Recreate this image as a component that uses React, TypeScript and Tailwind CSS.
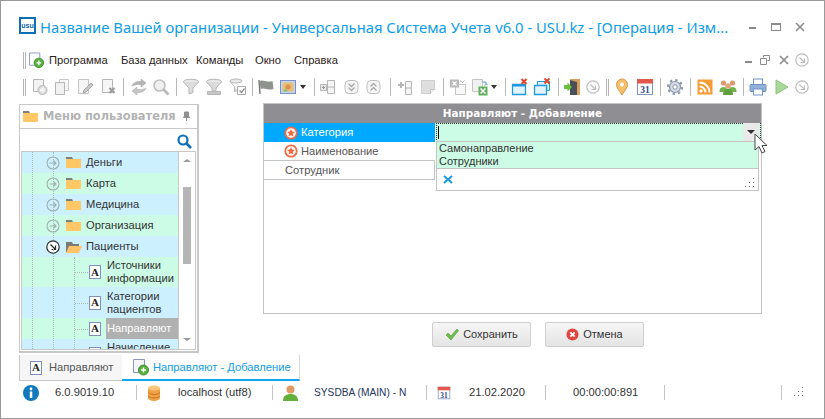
import type { ReactNode } from 'react'

const font = { fontFamily: '"Liberation Sans", sans-serif' }

function Ico({ children, size = 18 }: { children: ReactNode; size?: number }) {
  return (
    <svg width={size} height={size} viewBox="0 0 18 18" fill="none" className="shrink-0">
      {children}
    </svg>
  )
}

function Tool({ className = '', children }: { className?: string; children: ReactNode }) {
  return <div className={`flex h-[18px] w-[18px] shrink-0 items-center justify-center ${className}`}>{children}</div>
}

function Sep({ className = '' }: { className?: string }) {
  return <div className={`h-[18px] w-px shrink-0 bg-[#b9b9b9] ${className}`} />
}

function Grip({ className = '' }: { className?: string }) {
  return (
    <div className={`flex h-[17px] w-[3px] shrink-0 justify-between ${className}`}>
      <div className="w-px bg-[#b4b4b4]" />
      <div className="w-px bg-[#b4b4b4]" />
    </div>
  )
}

function DropArrow({ className = '' }: { className?: string }) {
  return (
    <div className={`flex h-[18px] w-[7px] shrink-0 items-center ${className}`}>
      <div className="h-0 w-0 border-x-[3.5px] border-t-[4px] border-x-transparent border-t-[#333]" />
    </div>
  )
}

const G = '#b5b5b5'

const IconAddDoc = () => (
  <Ico>
    <path d="M2.500 1.500h10v12h-10z" fill="#f4f4f4" stroke={G} />
    <circle cx="11.500" cy="12" r="4.500" fill="#dedede" stroke={G} />
    <path d="M9 12h5M11.500 9.500v5" stroke="#fff" strokeWidth="1.600" />
  </Ico>
)
const IconCopy = () => (
  <Ico>
    <path d="M6.500 1.500h9v11h-9z" fill="#f6f6f6" stroke="#c9c9c9" />
    <path d="M2.500 4.500h9v12h-9z" fill="#f1f1f1" stroke={G} />
  </Ico>
)
const IconEdit = () => (
  <Ico>
    <path d="M2.500 1.500h10v14h-10z" fill="#f6f6f6" stroke="#c4c4c4" />
    <path d="M7 15l1-3 7-7 2 2-7 7z" fill="#c9c9c9" stroke="#a8a8a8" />
  </Ico>
)
const IconDelDoc = () => (
  <Ico>
    <path d="M2.500 1.500h10v13h-10z" fill="#f6f6f6" stroke={G} />
    <path d="M9.500 10l5 5M14.500 10l-5 5" stroke="#9c9c9c" strokeWidth="2.200" />
  </Ico>
)
const IconRefresh = () => (
  <Ico>
    <path d="M2 8c1-3 4-4.500 7-4.500h2V1l5 4-5 4V6.500H9C6 6.500 4 7 2 8z" fill="#b4b4b4" stroke="#a0a0a0" strokeWidth="0.500" />
    <path d="M16 10c-1 3-4 4.500-7 4.500H7V17l-5-4 5-4v2.500h2c3 0 5-.500 7-1.500z" fill="#c6c6c6" stroke="#a8a8a8" strokeWidth="0.500" />
  </Ico>
)
const IconSearchGrey = () => (
  <Ico>
    <circle cx="7.500" cy="7.500" r="5.500" fill="#f0f0f0" stroke="#c0c0c0" strokeWidth="1.600" />
    <path d="M11.500 11.500l5 5" stroke="#b8b8b8" strokeWidth="2.600" />
  </Ico>
)
const IconFunnel = () => (
  <Ico>
    <ellipse cx="9" cy="3.500" rx="7.500" ry="2.200" fill="#e8e8e8" stroke={G} />
    <path d="M1.500 4l5.500 6v6l4-1.500V10l5.500-6" fill="#dcdcdc" stroke={G} />
  </Ico>
)
const IconFunnelBase = () => (
  <Ico>
    <ellipse cx="9" cy="3.500" rx="7.500" ry="2.200" fill="#e8e8e8" stroke={G} />
    <path d="M1.500 4l5.500 6v3h4v-3l5.500-6" fill="#dcdcdc" stroke={G} />
    <path d="M2.500 13.500h13v3h-13z" fill="#c8c8c8" stroke={G} />
  </Ico>
)
const IconFunnelCheck = () => (
  <Ico>
    <ellipse cx="7" cy="3" rx="6" ry="2" fill="#e8e8e8" stroke={G} />
    <path d="M1 3.500l4.500 5v5l3-1" fill="#dcdcdc" stroke={G} />
    <path d="M8.500 8.500h8v8h-8z" fill="#fff" stroke="#a8a8a8" />
    <path d="M10.500 12.500l2 2 3-4" stroke="#8f8f8f" strokeWidth="1.300" />
  </Ico>
)
const IconFlag = () => (
  <Ico>
    <path d="M2 2l1 14" stroke="#777" strokeWidth="1.400" />
    <path d="M2.500 3c4-2 7 2 13 0l1 8c-5 2-9-2-13 0z" fill="#8f948f" />
  </Ico>
)
const IconImage = () => (
  <Ico>
    <rect x="1.500" y="2.500" width="15" height="13" fill="#bcd8ee" stroke="#7e8fc4" />
    <rect x="3.500" y="4.500" width="11" height="9" fill="#e9bd78" />
    <circle cx="9" cy="9" r="2.500" fill="#d98f4a" />
    <path d="M3.500 13.500l3-3 3 3z" fill="#8fc07a" />
  </Ico>
)
const IconGridAdd = () => (
  <Ico>
    <path d="M8.500 2.500h7v13h-7z" fill="#f5f5f5" stroke={G} />
    <path d="M8.500 9h7" stroke={G} />
    <path d="M1.500 6.500h6v6h-6z" fill="#e6e6e6" stroke={G} />
    <path d="M3 9.500h3M4.500 8v3" stroke="#999" />
  </Ico>
)
const IconExpand = ({ up = false }: { up?: boolean }) => (
  <Ico>
    <rect x="2" y="2.500" width="13" height="13" rx="4" fill="#f6f6f6" stroke="#bdbdbd" />
    <path
      d={up ? 'M5.500 8.500l3-3 3 3M5.500 12.500l3-3 3 3' : 'M5.500 5.500l3 3 3-3M5.500 9.500l3 3 3-3'}
      stroke="#a6a6a6"
      strokeWidth="1.300"
    />
  </Ico>
)
const IconColAdd = () => (
  <Ico>
    <path d="M9.500 3.500h6v13h-6zM9.500 10h6" fill="#f5f5f5" stroke={G} />
    <path d="M2 7h6M5 4v6" stroke="#b5b5b5" strokeWidth="2" />
  </Ico>
)
const IconNote = () => (
  <Ico>
    <path d="M2.500 2.500h13v9l-4 4h-9z" fill="#dedede" stroke="#cfcfcf" />
    <path d="M11.500 15.500v-4h4" fill="#f2f2f2" stroke="#c0c0c0" />
  </Ico>
)
const IconExport = () => (
  <Ico>
    <path d="M6.500 6.500h10v10h-10z" fill="#f7f7f7" stroke="#c4c4c4" />
    <rect x="1" y="1.500" width="9" height="8" fill="#b9b9b9" />
    <path d="M3.500 3.500l4 4M7.500 3.500l-4 4" stroke="#fff" strokeWidth="1.300" />
    <path d="M11 2.500l2.500 2 2-2" stroke="#b5b5b5" />
  </Ico>
)
const IconExcel = () => (
  <Ico>
    <path d="M1.500 1.500h10v12h-10z" fill="#f0f0f0" stroke="#c4c4c4" />
    <rect x="7.500" y="8.500" width="9" height="9" fill="#5faf5f" />
    <path d="M9.500 10.500l5 5M14.500 10.500l-5 5" stroke="#fff" strokeWidth="1.500" />
    <path d="M11 4h4v3M13.500 7.500l2-1.500 1 1" stroke="#5a9fd4" />
  </Ico>
)
const IconWinClose = () => (
  <Ico>
    <path d="M1.500 6.500h13v10h-13z" fill="#e3f3fc" stroke="#1e9be0" strokeWidth="1.300" />
    <path d="M1.500 6.500h13v2h-13z" fill="#1e9be0" />
    <path d="M10.500 1l5 5M15.500 1l-5 5" stroke="#e2452c" strokeWidth="2" />
  </Ico>
)
const IconWinsClose = () => (
  <Ico>
    <path d="M4.500 3.500h12v9h-12z" fill="#d8effb" stroke="#1e9be0" />
    <path d="M1.500 7.500h12v9h-12z" fill="#e3f3fc" stroke="#1e9be0" strokeWidth="1.300" />
    <path d="M11.500 0.500l5 5M16.500 0.500l-5 5" stroke="#e2452c" strokeWidth="2" />
  </Ico>
)
const IconDoor = () => (
  <Ico>
    <rect x="7" y="1" width="10" height="16" fill="#d9a15f" />
    <path d="M7 2l7 2v13H7z" fill="#4a4f57" />
    <path d="M1 7h3.500V4.500L9 9l-4.500 4.500V11H1z" fill="#65c23a" />
  </Ico>
)
const IconCircleArrow = ({ color = '#bdbdbd' }: { color?: string }) => (
  <Ico>
    <circle cx="9" cy="9" r="6.200" fill="#fff" stroke={color} strokeWidth="1.200" />
    <path d="M6.500 6.500l5 5M11.500 7.500v4h-4" stroke={color} strokeWidth="1.200" />
  </Ico>
)
const IconPin = () => (
  <Ico>
    <path d="M9 17C6 12 3.500 10 3.500 6.500a5.500 5.500 0 0 1 11 0C14.500 10 12 12 9 17z" fill="#f6bf6d" stroke="#d59a46" />
    <circle cx="9" cy="6.500" r="2" fill="#fff" />
  </Ico>
)
const IconCal = ({ size = 18 }: { size?: number }) => (
  <Ico size={size}>
    <rect x="1.500" y="1.500" width="15" height="15" fill="#fff" stroke="#7f94c0" />
    <rect x="1" y="1" width="16" height="4.500" fill="#e2584a" />
    <text x="9" y="15" textAnchor="middle" fontSize="9.500" fontWeight="700" fill="#2f4c8c" fontFamily="Liberation Serif, serif">
      31
    </text>
  </Ico>
)
const IconGear = () => (
  <Ico>
    <circle cx="9" cy="9" r="5.500" fill="#d5dbe6" stroke="#8d97aa" strokeWidth="1.200" />
    <circle cx="9" cy="9" r="7" stroke="#8d97aa" strokeWidth="2.200" strokeDasharray="2.400 3.100" />
    <circle cx="9" cy="9" r="2.200" fill="#fff" stroke="#8d97aa" />
  </Ico>
)
const IconRss = () => (
  <Ico>
    <rect x="1.500" y="1.500" width="15" height="15" fill="#f59a35" />
    <circle cx="5" cy="13" r="1.700" fill="#fff" />
    <path d="M3.500 8.500a6 6 0 0 1 6 6M3.500 4.500a10 10 0 0 1 10 10" stroke="#fff" strokeWidth="1.800" />
  </Ico>
)
const IconPeople = () => (
  <Ico>
    <circle cx="4.500" cy="5" r="2.600" fill="#d99a6c" />
    <circle cx="13.500" cy="5" r="2.600" fill="#d99a6c" />
    <circle cx="9" cy="8" r="2.800" fill="#e0a77a" />
    <path d="M0.500 13c0-3 2-4 4-4s3 1 4 3v2H0.500zM9.500 12c1-2 2-3 4-3s4 1 4 4v1h-8z" fill="#73b24c" />
    <path d="M4 17c0-4 2-6 5-6s5 2 5 6z" fill="#5f9f3c" />
  </Ico>
)
const IconPrinter = () => (
  <Ico>
    <rect x="4.500" y="1" width="9" height="6" fill="#fff" stroke="#6f94c4" />
    <rect x="1" y="6.500" width="16" height="7" rx="1" fill="#8fb1da" stroke="#6f94c4" />
    <rect x="4.500" y="11" width="9" height="6" fill="#fff" stroke="#6f94c4" />
  </Ico>
)
const IconPlay = () => (
  <Ico>
    <path d="M4 2l12 7-12 7z" fill="#a8d89a" stroke="#8cc37c" />
  </Ico>
)
const IconFolder = ({ open = false }: { open?: boolean }) => (
  <svg width="16" height="14" viewBox="0 0 16 14" className="shrink-0">
    {open ? (
      <>
        <path d="M0 2h6l1 2h6v8H0z" fill="#7a7a7a" />
        <path d="M3 6h13l-3 7H0z" fill="#ffc266" />
      </>
    ) : (
      <>
        <path d="M0 1h6l1 2H0z" fill="#7f7f7f" />
        <rect x="0" y="3" width="15" height="9" fill="#ffc766" />
      </>
    )}
  </svg>
)
const IconLeaf = () => (
  <div
    className="flex h-[14px] w-[12px] shrink-0 items-center justify-center border border-[#7f8fc0] bg-white text-[11px] font-bold leading-none text-[#222]"
    style={{ fontFamily: '"Liberation Serif", serif' }}
  >
    A
  </div>
)
const IconTabAdd = () => (
  <svg width="17" height="17" viewBox="0 0 17 17" className="shrink-0">
    <path d="M0.500 0.500h11v13h-11z" fill="#f5f7fb" stroke="#8a97c0" />
    <circle cx="10.500" cy="11" r="5" fill="#58b03f" stroke="#3e8f2c" />
    <path d="M8 11h5M10.500 8.500v5" stroke="#fff" strokeWidth="1.400" />
  </svg>
)
const IconStar = () => (
  <svg width="14" height="14" viewBox="0 0 14 14" className="shrink-0">
    <circle cx="7" cy="7" r="5.700" fill="#fff" stroke="#ef6a45" strokeWidth="1.800" />
    <path d="M7 3l1.200 2.600 2.800.3-2.100 1.900.6 2.800L7 9.200l-2.500 1.400.6-2.800L3 5.900l2.800-.3z" fill="#ef6a45" />
  </svg>
)
const ResizeGrip = ({ className = '' }: { className?: string }) => (
  <svg width="11" height="11" viewBox="0 0 11 11" className={className}>
    <path d="M9 0h1v1H9zM9 4h1v1H9zM5 4h1v1H5zM9 8h1v1H9zM5 8h1v1H5zM1 8h1v1H1z" fill="#666" />
  </svg>
)

function Tree({ open = false, label, cls }: { open?: boolean; label: string; cls: string }) {
  return (
    <div className={`flex h-[21px] shrink-0 items-center pl-[21px] ${cls}`}>
      <div className="flex w-[20px] items-center justify-center">
        {open ? (
          <IconCircleArrow color="#2b2b2b" />
        ) : (
          <svg width="14" height="14" viewBox="0 0 14 14">
            <circle cx="7" cy="7" r="6" fill="none" stroke="#9fb0ae" strokeWidth="1.100" />
            <path d="M3.500 7h6.500M7.500 4.500L10 7l-2.500 2.500" fill="none" stroke="#9fb0ae" strokeWidth="1.100" />
          </svg>
        )}
      </div>
      <div className="ml-[3px] mr-[4px]">
        <IconFolder open={open} />
      </div>
      <span className="text-[11.200px] text-[#333]">{label}</span>
    </div>
  )
}

function Leaf({ lines, cls, selected = false }: { lines: string[]; cls: string; selected?: boolean }) {
  return (
    <div className={`relative flex shrink-0 items-stretch pl-[67px] ${cls}`}>
      <div className="flex w-[17px] items-center">
        <IconLeaf />
      </div>
      <div
        className={`flex flex-1 flex-col justify-center pl-[1px] text-[11.200px] leading-[13px] ${
          selected ? 'bg-[#b0b0b0] text-white' : 'text-[#333]'
        }`}
      >
        {lines.map((l) => (
          <span key={l}>{l}</span>
        ))}
      </div>
      <div className="absolute left-[53px] top-1/2 w-[13px] border-t border-dotted border-[#a9b9b9]" />
    </div>
  )
}

function StatusText({ className, children }: { className: string; children: ReactNode }) {
  return <span className={`shrink-0 whitespace-nowrap text-[#333] ${className}`}>{children}</span>
}

function StatusSep({ className = '' }: { className?: string }) {
  return <div className={`h-[15px] w-px shrink-0 bg-[#c4c4c4] ${className}`} />
}

export default function App() {
  return (
    <div
      className="relative flex h-[419px] w-[825px] flex-col overflow-hidden border border-[#9a9a9a] bg-white"
      style={font}
    >
      {/* title */}
      <div className="flex h-[46px] shrink-0 items-end pb-[8px] pl-[18px]">
        <div className="mb-[5px] flex h-[17px] w-[17px] shrink-0 items-center justify-center border-2 border-[#0d6fb8]">
          <span className="text-[7px] font-bold leading-none text-[#0d5fa8]">usu</span>
        </div>
        <span
          className="ml-[4px] w-[688px] shrink-0 whitespace-nowrap text-[14.800px] leading-[24px] text-[#0e9de6]"
          style={{ fontFamily: '"Noto Sans", sans-serif' }}
        >
          Название Вашей организации - Универсальная Система Учета v6.0 - USU.kz - [Операция - Изм...
        </span>
        <div className="mb-[10px] ml-[21px] h-[2px] w-[7px] bg-[#8a8a8a]" />
        <div className="mb-[8px] ml-[15px] h-[8px] w-[10px] border border-t-2 border-[#8a8a8a]" />
        <svg width="10" height="10" viewBox="0 0 10 10" className="mb-[7px] ml-[14px]">
          <path d="M1 1l8 8M9 1l-8 8" stroke="#8a8a8a" strokeWidth="1.600" />
        </svg>
      </div>

      {/* menu */}
      <div className="flex h-[26px] shrink-0 items-center pl-[22px] text-[11.200px] text-[#2a2020]">
        <Grip className="mr-[3px]" />
        <svg width="16" height="17" viewBox="0 0 17 17" className="shrink-0">
          <path d="M0.500 0.500h11v13h-11z" fill="#fff" stroke="#8a97c0" />
          <circle cx="10.500" cy="11" r="5" fill="#58b03f" stroke="#3e8f2c" />
          <path d="M8 11h5M10.500 8.500v5" stroke="#fff" strokeWidth="1.400" />
        </svg>
        <span className="ml-[4px] w-[72px] shrink-0">Программа</span>
        <span className="w-[75px] shrink-0">База данных</span>
        <span className="w-[59px] shrink-0">Команды</span>
        <span className="w-[39px] shrink-0">Окно</span>
        <span>Справка</span>
        <div className="flex-1" />
        <div className="mt-[3px] h-[2px] w-[7px] bg-[#8a8a8a]" />
        <svg width="10" height="10" viewBox="0 0 10 10" className="ml-[8px]">
          <path d="M3.500 2.500V.5h6v5h-2M.5 3.500h6v6h-6z" fill="none" stroke="#8a8a8a" />
        </svg>
        <svg width="10" height="10" viewBox="0 0 10 10" className="ml-[9px]">
          <path d="M1 1l8 8M9 1l-8 8" stroke="#8a8a8a" strokeWidth="1.600" />
        </svg>
        <div className="ml-[4px] mr-[13px]">
          <IconCircleArrow />
        </div>
      </div>

      {/* toolbar */}
      <div className="flex h-[28px] shrink-0 items-center pl-[22px]">
        <Grip className="mr-[2px]" />
        <Tool className="ml-[3px]"><IconAddDoc /></Tool>
        <Tool className="ml-[4px]"><IconCopy /></Tool>
        <Tool className="ml-[5px]"><IconEdit /></Tool>
        <Tool className="ml-[6px]"><IconDelDoc /></Tool>
        <Sep className="ml-[5px]" />
        <Tool className="ml-[6px]"><IconRefresh /></Tool>
        <Tool className="ml-[4px]"><IconSearchGrey /></Tool>
        <Sep className="ml-[6px]" />
        <Tool className="ml-[5px]"><IconFunnel /></Tool>
        <Tool className="ml-[5px]"><IconFunnelBase /></Tool>
        <Tool className="ml-[6px]"><IconFunnelCheck /></Tool>
        <Sep className="ml-[5px]" />
        <Tool className="ml-[4px]"><IconFlag /></Tool>
        <Tool className="ml-[4px]"><IconImage /></Tool>
        <DropArrow className="ml-[3px]" />
        <Sep className="ml-[7px]" />
        <Tool className="ml-[4px]"><IconGridAdd /></Tool>
        <Tool className="ml-[6px]"><IconExpand /></Tool>
        <Tool className="ml-[4px]"><IconExpand up /></Tool>
        <Sep className="ml-[7px]" />
        <Tool className="ml-[5px]"><IconColAdd /></Tool>
        <Tool className="ml-[5px]"><IconNote /></Tool>
        <Sep className="ml-[6px]" />
        <Tool className="ml-[5px]"><IconExport /></Tool>
        <Tool className="ml-[4px]"><IconExcel /></Tool>
        <DropArrow className="ml-[2px]" />
        <Sep className="ml-[7px]" />
        <Tool className="ml-[5px]"><IconWinClose /></Tool>
        <Tool className="ml-[4px]"><IconWinsClose /></Tool>
        <Sep className="ml-[7px]" />
        <Tool className="ml-[4px]"><IconDoor /></Tool>
        <Tool className="ml-[3px]"><IconCircleArrow /></Tool>
        <Grip className="ml-[4px]" />
        <Tool className="ml-[4px]"><IconPin /></Tool>
        <Tool className="ml-[5px]"><IconCal /></Tool>
        <Sep className="ml-[6px]" />
        <Tool className="ml-[5px]"><IconGear /></Tool>
        <Sep className="ml-[6px]" />
        <Tool className="ml-[5px]"><IconRss /></Tool>
        <Tool className="ml-[5px]"><IconPeople /></Tool>
        <Sep className="ml-[6px]" />
        <Tool className="ml-[5px]"><IconPrinter /></Tool>
        <Tool className="ml-[5px]"><IconPlay /></Tool>
        <Tool className="ml-[3px]"><IconCircleArrow /></Tool>
      </div>

      {/* body */}
      <div className="flex h-[254px] shrink-0 pl-[18px] pt-[2px]">
        {/* user menu */}
        <div className="mt-px flex h-[249px] w-[180px] shrink-0 flex-col border-2 border-l border-t border-[#c8c8c8]">
          <div className="flex h-[24px] shrink-0 items-center border-b border-[#c8c8c8] pl-[3px] pr-[6px]">
            <IconFolder />
            <span
              className="ml-[4px] flex-1 whitespace-nowrap text-[11.400px] font-bold text-[#b3b3b3]"
              style={{ fontFamily: '"DejaVu Sans", sans-serif' }}
            >
              Меню пользователя
            </span>
            <svg width="9" height="11" viewBox="0 0 9 11">
              <path d="M2.500 1h4v4l1 1.500h-6l1-1.500zM4.500 6.500V10" fill="#8f8f8f" stroke="#8f8f8f" />
            </svg>
          </div>
          <div className="flex h-[22px] shrink-0 items-center justify-end pr-[5px] pt-[2px]">
            <svg width="15" height="15" viewBox="0 0 15 15">
              <circle cx="6" cy="6" r="4.500" fill="none" stroke="#0e6fb8" strokeWidth="2.200" />
              <path d="M9.500 9.500l4.500 4.500" stroke="#0e6fb8" strokeWidth="2.600" />
            </svg>
          </div>
          <div className="mx-[1px] flex h-[199px] overflow-hidden border border-[#c8c8c8]">
            <div className="relative flex h-full w-[157px] shrink-0 flex-col overflow-hidden border-r border-[#c8c8c8]">
              <Tree label="Деньги" cls="bg-[#cdf0ff]" />
              <Tree label="Карта" cls="bg-[#cdfce6]" />
              <Tree label="Медицина" cls="bg-[#cdf0ff]" />
              <Tree label="Организация" cls="bg-[#cdfce6]" />
              <Tree open label="Пациенты" cls="bg-[#cdf0ff]" />
              <Leaf lines={['Источники', 'информации']} cls="h-[30px] bg-[#cdfce6]" />
              <Leaf lines={['Категории', 'пациентов']} cls="h-[31px] bg-[#cdf0ff]" />
              <Leaf selected lines={['Направляют']} cls="h-[21px] bg-[#cdfce6]" />
              <Leaf lines={['Начисление', '\u00a0']} cls="h-[30px] bg-[#cdf0ff]" />
              {/* tree guide lines */}
              <div className="absolute left-[10px] top-0 h-full border-l border-dotted border-[#a9b9b9]" />
              <div className="absolute left-[31px] top-0 h-[88px] border-l border-dotted border-[#a9b9b9]" />
              <div className="absolute left-[31px] top-[97px] h-[110px] border-l border-dotted border-[#a9b9b9]" />
              <div className="absolute left-[52px] top-[105px] h-[100px] border-l border-dotted border-[#a9b9b9]" />
            </div>
            <div className="flex flex-1 flex-col items-center pt-[7px]">
              <div className="h-0 w-0 border-x-[4px] border-b-[3px] border-x-transparent border-b-[#999]" />
              <div className="mt-[25px] h-[77px] w-[8px] shrink-0 bg-[#b5b5b5]" />
              <div className="flex-1" />
              <div className="mb-[8px] h-0 w-0 border-x-[4px] border-t-[3px] border-x-transparent border-t-[#999]" />
            </div>
          </div>
        </div>

        {/* form */}
        <div className="ml-[64px] flex w-[499px] shrink-0 flex-col">
          <div className="flex h-[211px] shrink-0 flex-col border border-[#c4c4c4]">
            <div
              className="flex h-[19px] shrink-0 items-center justify-center bg-[#8e8e93] pl-[20px] text-[10.400px] font-bold text-white"
              style={{ fontFamily: '"DejaVu Sans", sans-serif' }}
            >
              Направляют - Добавление
            </div>
            <div className="flex h-[19px] shrink-0">
              <div className="flex w-[171px] shrink-0 items-center bg-[#00a8ff] pl-[20px] text-[11.200px] text-white">
                <IconStar />
                <span className="ml-[3px]">Категория</span>
              </div>
              <div className="ml-px flex-1 border border-dotted border-[#333] bg-[#cdfce6]">
                <div className="ml-[1px] mt-[2px] h-[13px] w-px bg-black" />
              </div>
            </div>
            <div className="flex h-[19px] w-[171px] shrink-0 items-center border-b border-[#c4c4c4] pl-[20px] text-[11.200px] text-[#555]">
              <IconStar />
              <span className="ml-[3px]">Наименование</span>
            </div>
            <div className="flex h-[19px] w-[171px] shrink-0 items-center border-b border-r border-[#c4c4c4] pl-[21px] text-[11.200px] text-[#555]">
              Сотрудник
            </div>
          </div>
          <div className="mt-[8px] flex gap-[14px] pl-[169px]">
            <button className="flex h-[25px] w-[99px] items-center justify-center rounded-[2px] border border-[#cfcfcf] bg-gradient-to-b from-[#f6f6f6] to-[#e4e4e4] text-[11px] text-[#333]">
              <svg width="14" height="13" viewBox="0 0 14 13" className="mr-[4px]">
                <path d="M1 7l2-2 3 3 6-7 1.500 1.500L6 12z" fill="#6fbe4a" stroke="#4f9a32" strokeWidth="0.600" />
              </svg>
              Сохранить
            </button>
            <button className="flex h-[25px] w-[99px] items-center justify-center rounded-[2px] border border-[#cfcfcf] bg-gradient-to-b from-[#f6f6f6] to-[#e4e4e4] text-[11px] text-[#333]">
              <svg width="13" height="13" viewBox="0 0 13 13" className="mr-[4px]">
                <circle cx="6.500" cy="6.500" r="6" fill="#e2453c" />
                <path d="M4.300 4.300l4.400 4.400M8.700 4.300l-4.400 4.400" stroke="#fff" strokeWidth="1.800" />
              </svg>
              Отмена
            </button>
          </div>
        </div>
      </div>

      {/* tabs */}
      <div className="flex h-[26px] shrink-0 pl-[18px] text-[11.200px]">
        <div className="flex w-[103px] shrink-0 items-center border-b border-l border-[#c8c8c8] bg-[#f6f6f6] pl-[10px] text-[#555]">
          <IconLeaf />
          <span className="ml-[7px] whitespace-nowrap">Направляют</span>
        </div>
        <div className="flex w-[178px] shrink-0 items-center border-b-2 border-r border-b-[#10a5ee] border-r-[#d8d8d8] pl-[11px] text-[#0e9de6]">
          <IconTabAdd />
          <span className="ml-[3px] whitespace-nowrap">Направляют - Добавление</span>
        </div>
      </div>

      {/* status bar */}
      <div className="flex h-[23px] shrink-0 items-center pl-[22px] text-[11.200px]">
        <svg width="16" height="16" viewBox="0 0 16 16" className="shrink-0">
          <circle cx="8" cy="8" r="8" fill="#1279bd" />
          <circle cx="8" cy="4" r="1.400" fill="#fff" />
          <rect x="6.800" y="6.500" width="2.500" height="6.500" fill="#fff" />
        </svg>
        <StatusText className="ml-[16px] w-[64px]">6.0.9019.10</StatusText>
        <StatusSep className="ml-[17px]" />
        <svg width="12" height="16" viewBox="0 0 12 16" className="ml-[11px] shrink-0">
          <path d="M0 3h12v10a6 3 0 0 1-12 0z" fill="#f0a345" />
          <ellipse cx="6" cy="3" rx="6" ry="2.500" fill="#f8c77d" />
          <path d="M0 7a6 2.500 0 0 0 12 0M0 10.500a6 2.500 0 0 0 12 0" fill="none" stroke="#c9722a" />
        </svg>
        <StatusText className="ml-[18px] w-[73px]">localhost (utf8)</StatusText>
        <StatusSep className="ml-[21px]" />
        <svg width="15" height="16" viewBox="0 0 15 16" className="ml-[10px] shrink-0">
          <circle cx="7.500" cy="4.500" r="4" fill="#e09a62" />
          <path d="M0 16c0-5 3-7 7.500-7S15 11 15 16z" fill="#62b03a" />
        </svg>
        <StatusText className="ml-[16px] w-[92px] text-[10.200px] text-[#26345c]">SYSDBA (MAIN) - N</StatusText>
        <StatusSep className="ml-[20px]" />
        <div className="ml-[10px] shrink-0">
          <IconCal size={14} />
        </div>
        <StatusText className="ml-[18px] w-[55px]">21.02.2020</StatusText>
        <StatusSep className="ml-[21px]" />
        <StatusText className="ml-[27px] w-[66px]">00:00:00:891</StatusText>
        <StatusSep className="ml-[25px]" />
        <StatusSep className="ml-[116px]" />
        <ResizeGrip className="ml-[11px] shrink-0" />
      </div>

      {/* dropdown over the form */}
      <div className="absolute left-[435px] top-[140px] flex h-[50px] w-[323px] flex-col border border-[#c4c4c4] bg-white text-[11px] text-[#333]">
        <div className="flex h-[27px] shrink-0 flex-col justify-center border-b border-[#c4c4c4] bg-[#cdfce6] pl-[2px] leading-[13px]">
          <span>Самонаправление</span>
          <span>Сотрудники</span>
        </div>
        <div className="flex flex-1 items-center justify-between pl-[6px] pr-[3px]">
          <svg width="10" height="9" viewBox="0 0 10 9">
            <path d="M1 1l8 7M9 1L1 8" stroke="#1a9be0" strokeWidth="2" />
          </svg>
          <ResizeGrip className="mt-[8px]" />
        </div>
      </div>
      {/* combo button + cursor */}
      <div className="absolute left-[742px] top-[122px] flex h-[18px] w-[16px] items-center justify-center bg-[#e9e9e9]">
        <div className="h-0 w-0 border-x-[4px] border-t-[4px] border-x-transparent border-t-[#333]" />
      </div>
      <svg width="14" height="21" viewBox="0 0 14 21" className="absolute left-[753px] top-[132px]">
        <path d="M1 1v16l4-3.500 3 6.500 3-1.500-3-6h5z" fill="#fff" stroke="#444" strokeWidth="1" />
      </svg>
    </div>
  )
}
